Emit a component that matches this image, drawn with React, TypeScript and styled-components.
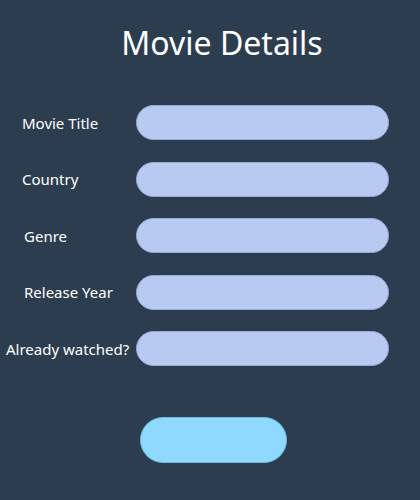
import React from "react";
import styled, { createGlobalStyle } from "styled-components";

const Global = createGlobalStyle`
  html, body { margin: 0; padding: 0; background: #2c3d50; }
  body { font-family: "Noto Sans", "Open Sans", sans-serif; }
`;

const Page = styled.div`
  width: 420px;
  height: 500px;
  background: #2c3d50;
  display: flex;
  flex-direction: column;
  box-sizing: border-box;
`;

const Title = styled.h1`
  margin: 0;
  padding-top: 21px;
  height: 85px;
  box-sizing: border-box;
  text-align: center;
  padding-left: 24px;
  font-size: 32px;
  font-weight: 400;
  color: #ffffff;
  line-height: 44px;
`;

const Form = styled.form`
  display: flex;
  flex-direction: column;
  gap: 21.5px;
  margin-top: 20px;
`;

const Row = styled.div`
  display: flex;
  align-items: center;
  height: 35px;
`;

const Label = styled.label<{ $indent: number }>`
  width: 136px;
  box-sizing: border-box;
  padding-left: ${(p) => p.$indent}px;
  color: #ffffff;
  font-size: 15px;
  white-space: nowrap;
`;

const Input = styled.input`
  width: 253px;
  height: 35px;
  box-sizing: border-box;
  border: 1px solid #98a9d4;
  border-radius: 18px;
  background: #b8c9f2;
  outline: none;
`;

const ButtonWrap = styled.div`
  display: flex;
  padding-left: 140px;
  margin-top: 51px;
`;

const Submit = styled.button`
  width: 147px;
  height: 46px;
  border-radius: 23px;
  border: 1px solid #73b9de;
  background: #8fd8ff;
  cursor: pointer;
`;

const fields = [
  { label: "Movie Title", indent: 22 },
  { label: "Country", indent: 22 },
  { label: "Genre", indent: 24 },
  { label: "Release Year", indent: 24 },
  { label: "Already watched?", indent: 6 },
];

export default function App() {
  return (
    <>
      <Global />
      <Page>
        <Title>Movie Details</Title>
        <Form onSubmit={(e) => e.preventDefault()}>
          {fields.map((f) => (
            <Row key={f.label}>
              <Label $indent={f.indent}>{f.label}</Label>
              <Input type="text" />
            </Row>
          ))}
        </Form>
        <ButtonWrap>
          <Submit type="submit" />
        </ButtonWrap>
      </Page>
    </>
  );
}
